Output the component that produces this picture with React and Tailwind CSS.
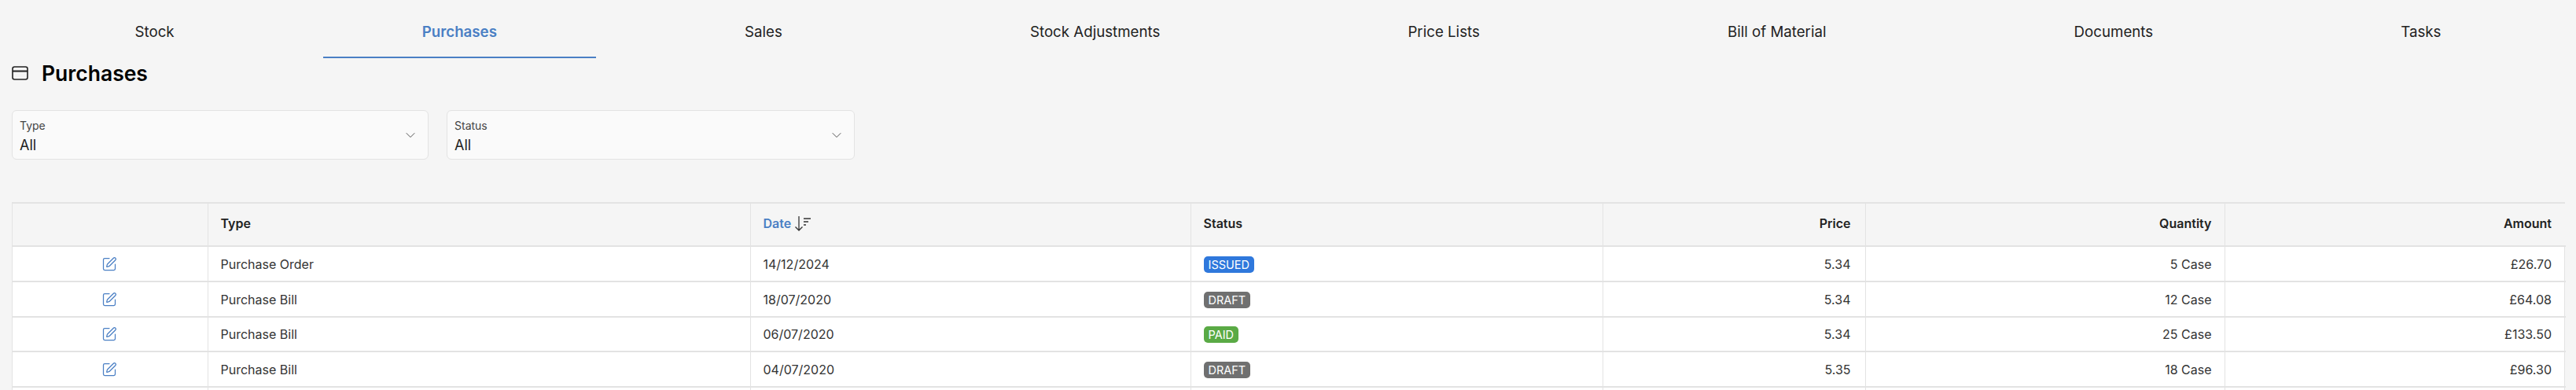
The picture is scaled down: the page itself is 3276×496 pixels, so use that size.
import React from "react";
import { ChevronDown, SquarePen } from "lucide-react";

const tabs = ["Stock", "Purchases", "Sales", "Stock Adjustments", "Price Lists", "Bill of Material", "Documents", "Tasks"];
const rows = [
  ["Purchase Order", "14/12/2024", "ISSUED", "5.34", "5 Case", "£26.70", 45],
  ["Purchase Bill", "18/07/2020", "DRAFT", "5.34", "12 Case", "£64.08", 45],
  ["Purchase Bill", "06/07/2020", "PAID", "5.34", "25 Case", "£133.50", 44],
  ["Purchase Bill", "04/07/2020", "DRAFT", "5.35", "18 Case", "£96.30", 45],
];
const badge = { ISSUED: "bg-[#2f78dc]", DRAFT: "bg-[#707070]", PAID: "bg-[#5aaa45]" };

function Filter({ label, w }) {
  return (
    <div className={`flex h-[63px] items-center justify-between rounded-md border border-[#e3e3e3] bg-[#fafafa] pl-[9px] pr-[12px] ${w}`}>
      <div className="flex flex-col pt-[4px]">
        <span className="text-[14px] leading-[20px] text-[#444]">{label}</span>
        <span className="mt-[3px] text-[18px] leading-[24px] text-[#222]">All</span>
      </div>
      <ChevronDown size={20} strokeWidth={1.2} className="text-[#555]" />
    </div>
  );
}

export default function App() {
  return (
    <div className="h-[496px] w-[3276px] overflow-hidden bg-[#f5f5f5] font-['Inter',sans-serif] text-black">
      <div className="flex h-[74px] gap-16 px-[46px]">
        {tabs.map((t) => (
          <div
            key={t}
            className={`flex flex-auto items-center justify-center pt-[10px] text-[18.7px] ${
              t === "Purchases" ? "border-b-2 border-[#4a7fc4] font-semibold text-[#4a7fc4]" : "border-b-2 border-transparent text-[#222]"
            }`}
          >
            {t}
          </div>
        ))}
      </div>
      <div className="flex h-[38px] items-center gap-[17px] pl-[15px]">
        <svg width="21" height="18" viewBox="0 0 21 18" fill="none" stroke="#222" strokeWidth="1.6">
          <rect x="1" y="1" width="19" height="16" rx="2.5" />
          <path d="M1 6.5h19" strokeWidth="2" />
        </svg>
        <h1 className="text-[26.5px] font-semibold leading-none">Purchases</h1>
      </div>
      <div className="mt-[28px] flex gap-[23px] pl-[15px]">
        <Filter label="Type" w="w-[530px]" />
        <Filter label="Status" w="w-[519px]" />
      </div>
      <div className="ml-[15px] mt-[54px] w-[3247px] border-t-2 border-l border-r border-[#e3e3e3] bg-white">
        <table className="w-full table-fixed border-collapse text-[16px] text-[#333]">
          <colgroup>
            <col className="w-[248px]" />
            <col className="w-[690px]" />
            <col className="w-[560px]" />
            <col className="w-[524px]" />
            <col className="w-[334px]" />
            <col className="w-[457px]" />
            <col className="w-[434px]" />
          </colgroup>
          <thead>
            <tr className="h-[54px] bg-[#f5f5f5] text-[#222]">
              <th className="border-b-2 border-r border-[#e3e3e3]" />
              <th className="border-b-2 border-r border-[#e3e3e3] pb-[3px] pl-4 text-left font-semibold">Type</th>
              <th className="border-b-2 border-r border-[#e3e3e3] pb-[3px] pl-4 text-left font-semibold">
                <span className="flex items-center gap-[3px] text-[#4a7fc4]">
                  Date
                  <svg width="24" height="24" viewBox="0 0 24 24" fill="none" stroke="#333" strokeWidth="1.3">
                    <path d="M7 3v18M2.5 16.5L7 21l4.500-4.500" />
                    <path d="M13 6h9M13 10h6M13 14h3" />
                  </svg>
                </span>
              </th>
              <th className="border-b-2 border-r border-[#e3e3e3] pb-[3px] pl-4 text-left font-semibold">Status</th>
              <th className="border-b-2 border-r border-[#e3e3e3] pb-[3px] pr-[18px] text-right font-semibold">Price</th>
              <th className="border-b-2 border-r border-[#e3e3e3] pb-[3px] pr-4 text-right font-semibold">Quantity</th>
              <th className="border-b-2 border-[#e3e3e3] pb-[3px] pr-[18px] text-right font-semibold">Amount</th>
            </tr>
          </thead>
          <tbody>
            {rows.map((r, i) => (
              <tr key={i} style={{ height: r[6] }}>
                <td className="border-b-2 border-r border-[#e3e3e3] pb-[3px] pr-[2px] text-center">
                  <SquarePen size={20} strokeWidth={1.5} className="inline-block text-[#4a7fc4]" />
                </td>
                <td className="border-b-2 border-r border-[#e3e3e3] pl-4">{r[0]}</td>
                <td className="border-b-2 border-r border-[#e3e3e3] pl-4">{r[1]}</td>
                <td className="border-b-2 border-r border-[#e3e3e3] pl-4">
                  <span className={`inline-block rounded-[5px] px-[6px] text-[14.500px] leading-[21px] text-white ${badge[r[2]]}`}>{r[2]}</span>
                </td>
                <td className="border-b-2 border-r border-[#e3e3e3] pr-[18px] text-right">{r[3]}</td>
                <td className="border-b-2 border-r border-[#e3e3e3] pr-4 text-right">{r[4]}</td>
                <td className="border-b-2 border-[#e3e3e3] pr-[18px] text-right">{r[5]}</td>
              </tr>
            ))}
            <tr className="h-[45px]">
              {[0, 1, 2, 3, 4, 5].map((c) => (
                <td key={c} className="border-r border-[#e3e3e3]" />
              ))}
              <td />
            </tr>
          </tbody>
        </table>
      </div>
    </div>
  );
}
